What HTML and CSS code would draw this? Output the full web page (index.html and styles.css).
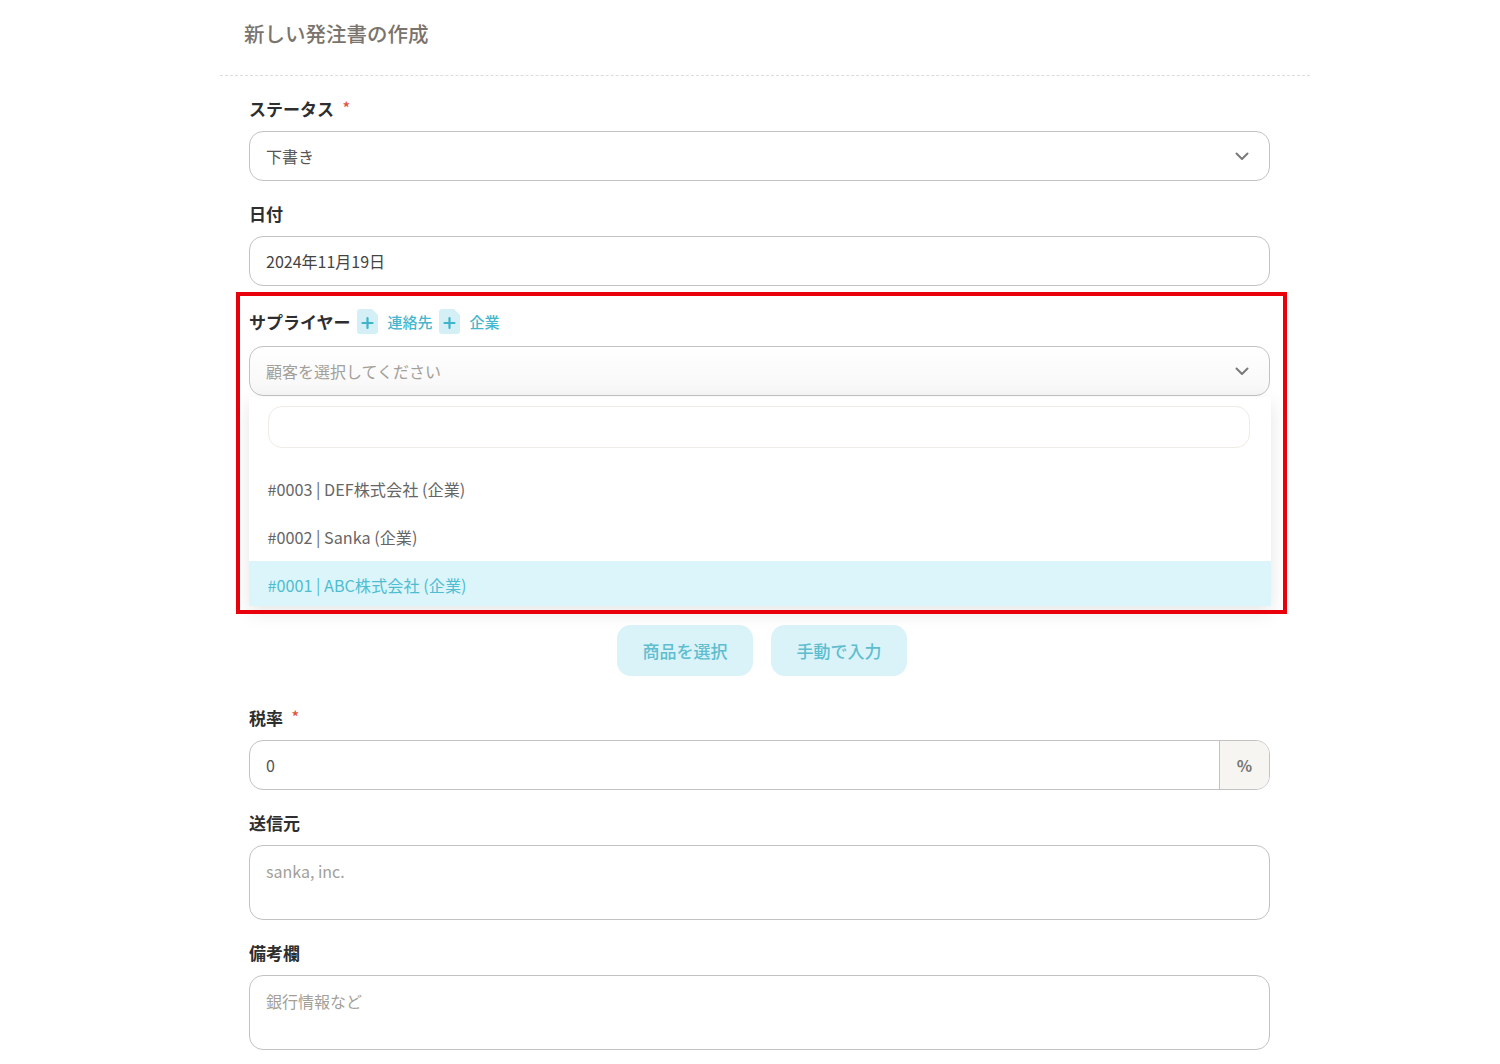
FILE: index.html
```html
<!DOCTYPE html>
<html lang="ja">
<head>
<meta charset="utf-8">
<title>新しい発注書の作成</title>
<link rel="stylesheet" href="styles.css">
</head>
<body>
<div class="page">
  <div class="header">
    <h1 class="title">新しい発注書の作成</h1>
  </div>
  <div class="form">
    <div class="field">
      <div class="label">ステータス <span class="req">*</span></div>
      <div class="control select">
        <span class="value">下書き</span>
        <svg class="chev" width="14" height="9" viewBox="0 0 14 9"><polyline points="1.5,1.5 7,7 12.5,1.5" fill="none" stroke="#7a7a7a" stroke-width="2" stroke-linecap="round" stroke-linejoin="round"/></svg>
      </div>
    </div>
    <div class="field">
      <div class="label">日付</div>
      <div class="control">
        <span class="value dark">2024年11月19日</span>
      </div>
    </div>
    <div class="field supplier">
      <div class="label label-row">サプライヤー
        <span class="badge"><svg width="21" height="25" viewBox="0 0 21 25"><path d="M3 0 H15 L21 6 V22 Q21 25 18 25 H3 Q0 25 0 22 V3 Q0 0 3 0 Z" fill="#d4f0f6"/><path d="M10.5 9 V19 M5.5 14 H15.5" stroke="#3fb3cb" stroke-width="2.2" stroke-linecap="round"/></svg></span>
        <span class="link">連絡先</span>
        <span class="badge"><svg width="21" height="25" viewBox="0 0 21 25"><path d="M3 0 H15 L21 6 V22 Q21 25 18 25 H3 Q0 25 0 22 V3 Q0 0 3 0 Z" fill="#d4f0f6"/><path d="M10.5 9 V19 M5.5 14 H15.5" stroke="#3fb3cb" stroke-width="2.2" stroke-linecap="round"/></svg></span>
        <span class="link">企業</span>
      </div>
      <div class="control select open">
        <span class="value placeholder">顧客を選択してください</span>
        <svg class="chev" width="14" height="9" viewBox="0 0 14 9"><polyline points="1.5,1.5 7,7 12.5,1.5" fill="none" stroke="#7a7a7a" stroke-width="2" stroke-linecap="round" stroke-linejoin="round"/></svg>
        <div class="dropdown">
          <div class="search"></div>
          <div class="option">#0003 | DEF株式会社 (企業)</div>
          <div class="option">#0002 | Sanka (企業)</div>
          <div class="option selected">#0001 | ABC株式会社 (企業)</div>
        </div>
      </div>
      <div class="highlight"></div>
    </div>
    <div class="items">
      <button class="btn">商品を選択</button>
      <button class="btn">手動で入力</button>
    </div>
    <div class="field">
      <div class="label">税率 <span class="req">*</span></div>
      <div class="control group">
        <span class="value">0</span>
        <span class="addon">%</span>
      </div>
    </div>
    <div class="field">
      <div class="label">送信元</div>
      <div class="control textarea">
        <span class="value placeholder">sanka, inc.</span>
      </div>
    </div>
    <div class="field">
      <div class="label">備考欄</div>
      <div class="control textarea">
        <span class="value placeholder">銀行情報など</span>
      </div>
    </div>
  </div>
</div>
</body>
</html>
```
FILE: styles.css
```css
* { box-sizing: border-box; }
html, body {
  margin: 0;
  padding: 0;
  background: #ffffff;
  font-family: "Noto Sans CJK JP", "Noto Sans", sans-serif;
}
.page {
  margin-left: 220px;
  width: 1090px;
}
.header {
  height: 76px;
  padding: 19px 0 0 24px;
  border-bottom: 1px dashed #dcdcdc;
}
.title {
  margin: 0;
  font-size: 20.5px;
  line-height: 28px;
  font-weight: 500;
  color: #7a746d;
}
.form {
  margin-left: 29px;
  width: 1021px;
  padding-top: 21px;
}
.field {
  margin-bottom: 21px;
}
.label {
  height: 24px;
  font-size: 17px;
  line-height: 24px;
  font-weight: 700;
  color: #2e2e2e;
  margin-bottom: 10px;
}
.req {
  position: relative;
  top: -3px;
  color: #e4553f;
  font-size: 14px;
  line-height: 0;
  margin-left: 5px;
}
.label-row {
  display: flex;
  align-items: center;
  height: 29px;
  margin-bottom: 10px;
}
.badge {
  display: inline-flex;
  margin-left: 6px;
  margin-right: 10px;
}
.link {
  font-size: 15px;
  font-weight: 500;
  color: #47b6cc;
}
.control {
  position: relative;
  height: 50px;
  border: 1.5px solid #c2c2c2;
  border-radius: 14px;
  background: #fff;
  display: flex;
  align-items: center;
  padding: 0 16px;
}
.value {
  font-size: 16px;
  color: #555;
}
.value.dark { color: #444; }
.placeholder { color: #a39f99; }
.chev {
  position: absolute;
  right: 20px;
  top: 50%;
  margin-top: -4px;
}
.supplier {
  position: relative;
  margin-bottom: 0;
}
.select.open {
  background: linear-gradient(#fff, #f7f7f7);
}
.dropdown {
  position: absolute;
  left: -1.5px;
  right: -1.5px;
  top: calc(100% + 1.5px);
  height: 209px;
  overflow: hidden;
  background: #fff;
  box-shadow: 0 6px 18px rgba(0,0,0,0.10);
  padding: 9px 0 0;
  z-index: 5;
}
.search {
  height: 42px;
  margin: 0 21px 17px 19px;
  border: 1.5px solid #efebe5;
  border-radius: 14px;
}
.option {
  height: 48px;
  line-height: 48px;
  padding-left: 19px;
  font-size: 16.2px;
  color: #666;
}
.option.selected {
  background: #dcf5fa;
  color: #4fbdd1;
}
.highlight {
  position: absolute;
  left: -13px;
  top: -15px;
  width: 1051px;
  height: 322px;
  border: 4px solid #e8000b;
  pointer-events: none;
  z-index: 10;
}
.items {
  margin-top: 229px;
  margin-bottom: 30px;
  display: flex;
  justify-content: center;
  gap: 18px;
  padding-left: 5px;
}
.btn {
  width: 136px;
  height: 51px;
  border: none;
  border-radius: 14px;
  background: #d9f3f8;
  color: #5fbdd0;
  font-family: "Noto Sans CJK JP", sans-serif;
  font-size: 17px;
  font-weight: 500;
}
.group {
  padding-right: 0;
  overflow: hidden;
}
.addon {
  margin-left: auto;
  width: 50px;
  height: 100%;
  border-left: 1.5px solid #c2c2c2;
  background: #f6f5f2;
  display: flex;
  align-items: center;
  justify-content: center;
  font-size: 16px;
  font-weight: 700;
  color: #777;
}
.textarea {
  height: 75px;
  align-items: flex-start;
  padding-top: 13px;
}
```
